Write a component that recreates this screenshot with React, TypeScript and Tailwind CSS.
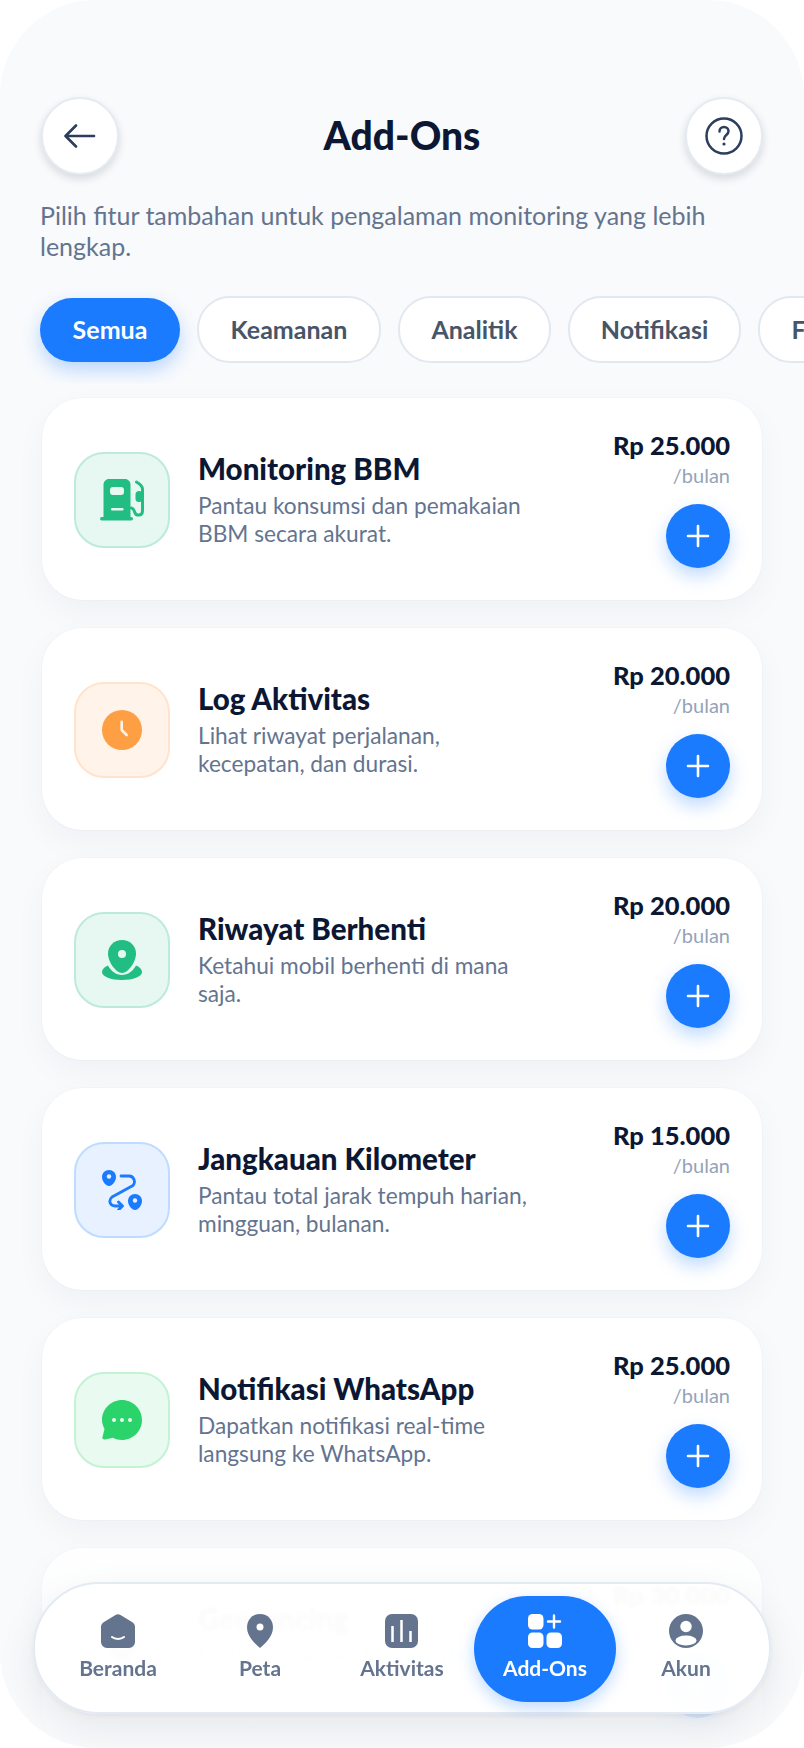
import type { ReactNode } from "react"

const font = { fontFamily: 'Lato, "Noto Sans", sans-serif' }

function FuelIcon() {
    return (
        <svg width="44" height="44" viewBox="0 0 44 44" fill="none">
            <path d="M9 1h16c3 0 5.500 2.500 5.500 5.500V39.500H3.500V6.500C3.500 3.500 6 1 9 1Z" fill="#22bd82" />
            <rect x="0" y="39" width="33" height="3.500" rx="1.700" fill="#22bd82" />
            <rect x="10" y="9" width="14" height="8" rx="3" fill="#e7f7f1" />
            <rect x="11" y="30" width="12.500" height="2.500" rx="1.200" fill="#e7f7f1" />
            <path d="M31 30c3 0 3 3 4 5 1.500 3 7.500 3 7.500-2V11c0-3-3.500-5.500-6-7" stroke="#22bd82" strokeWidth="3" strokeLinecap="round" strokeLinejoin="round" />
            <rect x="35.500" y="13" width="7" height="11" rx="3.500" fill="#22bd82" />
        </svg>
    )
}

function ClockIcon() {
    return (
        <svg width="40" height="40" viewBox="0 0 40 40" fill="none">
            <circle cx="20" cy="20" r="20" fill="#ff9f43" />
            <path d="M19.700 11.700V20L24.700 25" stroke="#fff3ea" strokeWidth="2.600" strokeLinecap="round" strokeLinejoin="round" />
        </svg>
    )
}

function StopIcon() {
    return (
        <svg width="40" height="40" viewBox="0 0 40 40">
            <path d="M20 0c8 0 14 6 14 13.500C34 22 26 33 20 33S6 22 6 13.500C6 6 12 0 20 0Z" fill="#22bd82" />
            <circle cx="20" cy="14" r="4" fill="#e7f7f1" />
            <path d="M6 25.500C2 27 0 29.500 0 32c0 4.500 9 8 20 8s20-3.500 20-8c0-2.500-2-5-6-6.500C31 31 26 35 20 35S9 31 6 25.500Z" fill="#22bd82" />
        </svg>
    )
}

function RouteIcon() {
    return (
        <svg width="40" height="40" viewBox="0 0 40 40" fill="none">
            <path d="M7 0c4 0 7 3 7 7 0 4.500-4 9-7 9s-7-4.500-7-9c0-4 3-7 7-7Z" fill="#1a7bff" />
            <circle cx="7" cy="6.500" r="2.200" fill="#e7f1ff" />
            <path d="M33 24c4 0 7 3 7 7 0 4.500-4 9-7 9s-7-4.500-7-9c0-4 3-7 7-7Z" fill="#1a7bff" />
            <circle cx="33" cy="30.500" r="2.200" fill="#e7f1ff" />
            <path d="M19 6h8c5 0 7 6 4 9.500L10 27c-4 3.500-2 9 3 9h7M16.500 32l4 4-4 4" stroke="#1a7bff" strokeWidth="2.800" strokeLinecap="round" strokeLinejoin="round" />
        </svg>
    )
}

function ChatIcon() {
    return (
        <svg width="40" height="40" viewBox="0 0 40 40">
            <path d="M20 0c11 0 20 9 20 20s-9 20-20 20c-3.500 0-6.500-1-9-2.300l-8 1.800C1.300 40 0 38.500.5 37l2-8C1 26 0 23 0 20 0 9 9 0 20 0Z" fill="#2bd46a" />
            <circle cx="12" cy="20" r="2" fill="#e9fbf0" />
            <circle cx="20" cy="20" r="2" fill="#e9fbf0" />
            <circle cx="28" cy="20" r="2" fill="#e9fbf0" />
        </svg>
    )
}

function HomeIcon() {
    return (
        <svg width="34" height="34" viewBox="0 0 34 34" fill="none">
            <path d="M14.500 1c1.500-1 3.500-1 5 0L31 8c2 1 3 3 3 5v15c0 3-3 6-6 6H6c-3 0-6-3-6-6V13c0-2 1-4 3-5Z" fill="#64748f" />
            <path d="M11 23c3 2.500 9 2.500 12 0" stroke="#fff" strokeWidth="2" strokeLinecap="round" />
        </svg>
    )
}

function PinIcon() {
    return (
        <svg width="34" height="34" viewBox="0 0 34 34">
            <path d="M17 0c8 0 13 6 13 13.500C30 22 22 30 17 34 12 30 4 22 4 13.500 4 6 9 0 17 0Z" fill="#64748f" />
            <circle cx="17" cy="13" r="3.500" fill="#fff" />
        </svg>
    )
}

function BarsIcon() {
    return (
        <svg width="34" height="34" viewBox="0 0 34 34" fill="none">
            <rect width="33" height="34" rx="7" fill="#64748f" />
            <path d="M7.500 12v16M16.500 6v22M25.500 17v11" stroke="#fff" strokeWidth="2.500" />
        </svg>
    )
}

function AddOnsIcon() {
    return (
        <svg width="34" height="34" viewBox="0 0 34 34" fill="none">
            <rect width="15.500" height="15.500" rx="4.500" fill="#fff" />
            <rect y="18.500" width="15.500" height="15.500" rx="4.500" fill="#fff" />
            <rect x="18.500" y="18.500" width="15.500" height="15.500" rx="4.500" fill="#fff" />
            <path d="M26 1.500v12M20 7.500h12" stroke="#fff" strokeWidth="2.400" strokeLinecap="round" />
        </svg>
    )
}

function UserIcon() {
    return (
        <svg width="34" height="34" viewBox="0 0 34 34">
            <circle cx="17" cy="17" r="17" fill="#64748f" />
            <circle cx="17" cy="12.500" r="5.700" fill="#fff" />
            <ellipse cx="17" cy="26.500" rx="10.500" ry="5" fill="#fff" />
        </svg>
    )
}

type AddOn = {
    title: string
    desc: string
    price: string
    box: string
    icon: ReactNode
}

const addOns: AddOn[] = [
    { title: "Monitoring BBM", desc: "Pantau konsumsi dan pemakaian\nBBM secara akurat.", price: "Rp 25.000", box: "bg-[#e7f7f1] border-[#bdebd9]", icon: <FuelIcon /> },
    { title: "Log Aktivitas", desc: "Lihat riwayat perjalanan,\nkecepatan, dan durasi.", price: "Rp 20.000", box: "bg-[#fff3ea] border-[#ffe3cc]", icon: <ClockIcon /> },
    { title: "Riwayat Berhenti", desc: "Ketahui mobil berhenti di mana\nsaja.", price: "Rp 20.000", box: "bg-[#e7f7f1] border-[#bdebd9]", icon: <StopIcon /> },
    { title: "Jangkauan Kilometer", desc: "Pantau total jarak tempuh harian,\nmingguan, bulanan.", price: "Rp 15.000", box: "bg-[#e7f1ff] border-[#bfdcff]", icon: <RouteIcon /> },
    { title: "Notifikasi WhatsApp", desc: "Dapatkan notifikasi real-time\nlangsung ke WhatsApp.", price: "Rp 25.000", box: "bg-[#e9fbf0] border-[#c3f2d4]", icon: <ChatIcon /> },
    { title: "Geofencing", desc: "Buat area aman dan dapatkan\nalert saat keluar/masuk area.", price: "Rp 30.000", box: "bg-[#e7f1ff] border-[#bfdcff]", icon: <PinIcon /> },
]

const chips = [
    { label: "Keamanan", width: "w-[184px]" },
    { label: "Analitik", width: "w-[153px]" },
    { label: "Notifikasi", width: "w-[173px]" },
    { label: "Fitur", width: "w-[120px]" },
]

const navItems = [
    { label: "Beranda", icon: <HomeIcon /> },
    { label: "Peta", icon: <PinIcon /> },
    { label: "Aktivitas", icon: <BarsIcon /> },
    { label: "Add-Ons", icon: <AddOnsIcon />, active: true },
    { label: "Akun", icon: <UserIcon /> },
]

function Card({ item }: { item: AddOn }) {
    return (
        <div className="flex items-center justify-between rounded-[40px] border border-white bg-white px-[31px] py-[31px] shadow-[0_0_0_1px_rgba(15,23,42,0.015),0_12px_32px_rgba(15,23,42,0.04)]">
            <div className="flex items-center gap-[28px]">
                <div className={`mt-px flex h-[96px] w-[96px] shrink-0 items-center justify-center rounded-[30px] border-2 ${item.box}`}>
                    {item.icon}
                </div>
                <div>
                    <div className="-mt-[1px] text-[29.5px] leading-[38px] font-black text-[#0b1733]">{item.title}</div>
                    <div className="mt-[4px] whitespace-pre-line text-[22.7px] leading-[28px] text-[#64748f]">{item.desc}</div>
                </div>
            </div>
            <div className="flex flex-col items-end">
                <div className="-mt-[2px] text-[25.5px] leading-[34px] font-black text-[#0b1733]">{item.price}</div>
                <div className="text-[20px] leading-[26px] text-[#94a3b8]">/bulan</div>
                <button className="mt-[16px] flex h-[64px] w-[64px] items-center justify-center rounded-full bg-[#1a7bff] shadow-[0_8px_18px_rgba(26,123,255,0.28)]">
                    <svg width="24" height="24" viewBox="0 0 24 24" fill="none">
                        <path d="M12 2v20M2 12h20" stroke="#fff" strokeWidth="2.600" strokeLinecap="round" />
                    </svg>
                </button>
            </div>
        </div>
    )
}

export default function App() {
    return (
        <div className="h-[1748px] w-[804px] overflow-hidden bg-white" style={font}>
            <div className="relative h-full w-full overflow-hidden rounded-[96px] bg-[#f8fafc] pt-[97px] pl-[40px] pr-[41px]">
                <div className="flex items-center justify-between pl-px">
                    <button className="flex h-[78px] w-[78px] items-center justify-center rounded-full border-2 border-[#e6ebf2] bg-white shadow-[0_4px_8px_rgba(15,23,42,0.14)]">
                        <svg width="32" height="24" viewBox="0 0 32 24" fill="none">
                            <path d="M30 12H2M12 1.500 1.500 12 12 22.500" stroke="#2c3e5c" strokeWidth="2.600" strokeLinecap="round" strokeLinejoin="round" />
                        </svg>
                    </button>
                    <h1 className="-mt-[2px] text-[39px] leading-[48px] font-black text-[#0b1733]">Add-Ons</h1>
                    <button className="flex h-[78px] w-[78px] items-center justify-center rounded-full border-2 border-[#e6ebf2] bg-white shadow-[0_4px_8px_rgba(15,23,42,0.14)]">
                        <svg width="38" height="38" viewBox="0 0 38 38" fill="none">
                            <circle cx="19" cy="19" r="17.500" stroke="#2c3e5c" strokeWidth="2.500" />
                            <path d="M14.500 14.500c0-2.700 2-4.500 4.500-4.500s4.500 1.800 4.500 4.300c0 3.700-4.500 3.700-4.500 7.700" stroke="#2c3e5c" strokeWidth="2.500" strokeLinecap="round" />
                            <circle cx="19" cy="27" r="1.600" fill="#2c3e5c" />
                        </svg>
                    </button>
                </div>

                <p className="mt-[25px] whitespace-pre-line text-[25px] leading-[31px] text-[#64748f]">
                    {"Pilih fitur tambahan untuk pengalaman monitoring yang lebih\nlengkap."}
                </p>

                <div className="mt-[14px] -mr-[41px] -mb-[20px] -ml-[40px] flex h-[107px] items-center gap-[17px] overflow-hidden pl-[40px]">
                    <div className="flex h-[64px] w-[140px] shrink-0 items-center justify-center rounded-[32px] bg-[#1a7bff] text-[25px] font-bold text-white shadow-[0_8px_18px_rgba(26,123,255,0.28)]">
                        Semua
                    </div>
                    {chips.map((chip) => (
                        <div key={chip.label} className={`flex h-[67px] shrink-0 items-center justify-center rounded-[33px] border-2 border-[#e2e8f0] bg-white text-[25px] font-bold text-[#475569] ${chip.width}`}>
                            {chip.label}
                        </div>
                    ))}
                </div>

                <div className="mt-[35px] mr-px flex flex-col gap-[28px] pl-[2px]">
                    {addOns.map((item) => (
                        <Card key={item.title} item={item} />
                    ))}
                </div>

                <div className="absolute inset-x-0 bottom-0 h-[218px] bg-gradient-to-b from-[#f8fafc]/0 to-[#f8fafc]" />

                <nav className="absolute bottom-[34px] left-[33px] flex h-[132px] w-[738px] items-center rounded-[66px] border-2 border-[#e4eaf3] bg-white/[0.97] pl-[12px] pr-[12px] shadow-[0_2px_6px_rgba(15,23,42,0.05),0_16px_40px_rgba(15,23,42,0.08)] backdrop-blur-[2px]">
                    {navItems.map((nav) => (
                        <div
                            key={nav.label}
                            className={`mt-[2px] flex h-[106px] flex-1 flex-col items-center gap-[6px] pt-[18px] text-[21px] leading-[28px] font-bold ${nav.active ? "-mr-px ml-px rounded-[53px] bg-[#1a7bff] text-white shadow-[0_6px_16px_rgba(26,123,255,0.28)]" : "text-[#64748f]"}`}
                        >
                            {nav.icon}
                            <span>{nav.label}</span>
                        </div>
                    ))}
                </nav>
            </div>
        </div>
    )
}
